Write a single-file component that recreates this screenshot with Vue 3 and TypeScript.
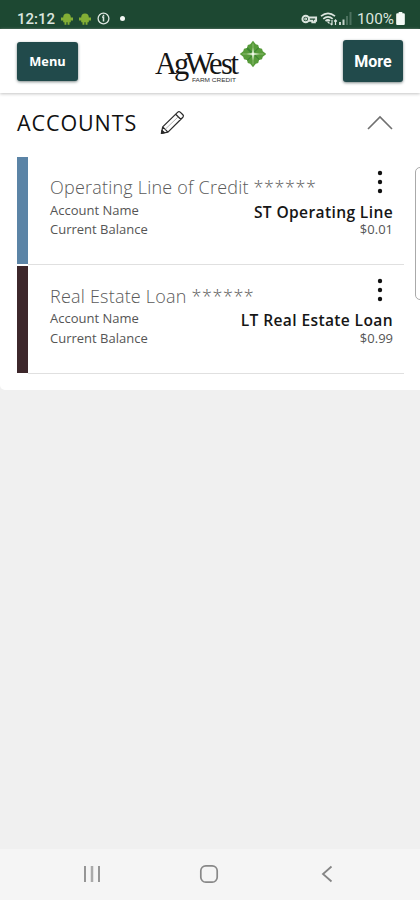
<script setup lang="ts">
interface Account {
  title: string
  mask: string
  name: string
  balance: string
  tone: string
}

const accounts: Account[] = [
  { title: 'Operating Line of Credit', mask: '******', name: 'ST Operating Line', balance: '$0.01', tone: 'blue' },
  { title: 'Real Estate Loan', mask: '******', name: 'LT Real Estate Loan', balance: '$0.99', tone: 'brown' },
]
</script>

<template>
  <div class="screen">
    <div class="status">
      <span class="clock">12:12</span>
      <svg v-for="n in 2" :key="n" class="droid" width="12" height="14" viewBox="0 0 12 14">
        <path d="M2.200 5.200a3.800 3.800 0 0 1 7.600 0zM2.200 5.200h7.600v5H8.500v2.600H6.600v-2.600H5.400v2.600H3.500v-2.600H2.200zM0 5.500h12v3H0z" fill="#83ae35" />
      </svg>
      <svg class="info" width="13" height="13" viewBox="0 0 13 13" fill="none" stroke="#dce5df">
        <circle cx="6.500" cy="6.500" r="5.400" stroke-width="1.300" />
        <path d="M5 5h1.500v4.500M6.500 2.800v1.200" stroke-width="1.500" />
      </svg>
      <span class="dot"></span>
      <div class="status-right">
        <svg width="17" height="12" viewBox="0 0 17 12" fill="none" stroke="#dce5df" stroke-width="1.900">
          <circle cx="4.700" cy="6" r="3.300" />
          <path d="M7.800 4.500h7.300v3.200h-1.200v1.600h-2.600v-1.600h-4" />
          <circle cx="4.700" cy="6" r=".5" />
        </svg>
        <svg class="wifi" width="18" height="14" viewBox="0 0 18 14" fill="none" stroke="#dce5df" stroke-width="1.700">
          <path d="M1 4.200Q8 -1.500 15 4.200M3.300 6.800Q8 2.800 12.700 6.800M5.500 9Q8 7 10 9" />
          <path d="M7.500 9.500l2 2M12 8v5m-1.500-1.500 1.500 1.500M15.500 13V8m-1.300 1.500 1.300-1.500 1.300 1.500" stroke-width="1.200" />
        </svg>
        <svg class="signal" width="13" height="13" viewBox="0 0 13 13">
          <path d="M0 10h2v3H0zM3.500 7.500h2V13h-2z" fill="#c4d2ca" />
          <path d="M7 4h2v9H7zM10.500 0h2v13h-2z" fill="#4c715e" />
        </svg>
        <span class="percent">100%</span>
        <svg class="battery" width="9" height="13" viewBox="0 0 8 12"><path d="M2.300 0h3.400v1.200H7q1 0 1 1V11q0 1-1 1H1q-1 0-1-1V2.200q0-1 1-1h1.300z" fill="#f4faf6" /></svg>
      </div>
    </div>

    <header class="header">
      <button class="btn menu" type="button">Menu</button>
      <svg class="logo" width="112" height="46" viewBox="0 0 112 46">
        <text class="logo-name" x="1 20 31 55 67 76.500" y="34">AgWest</text>
        <text class="logo-sub" x="38" y="41.500" textLength="44" lengthAdjust="spacingAndGlyphs">FARM CREDIT</text>
        <g transform="translate(99 14)">
          <g v-for="r in [0, 90, 180, 270]" :key="r" :transform="`rotate(${r})`">
            <path d="M0 0L-6-6-5.200-9-2.800-9.800 0-13.200 2.800-9.800 5.200-9 6-6z" fill="#579b3a" />
            <path d="M0-1V-10.500" stroke="#83b867" stroke-width="1.200" />
            <path d="M1.500-1.500L6-6" stroke="#3b8530" stroke-width="1.800" />
          </g>
          <path d="M0-6.500L.8-.8 6.500 0 .8.8 0 6.500-.8.8-6.500 0-.8-.8z" fill="#f5fbee" />
        </g>
      </svg>
      <button class="btn more" type="button">More</button>
    </header>

    <main class="panel">
      <div class="heading">
        <h1>ACCOUNTS</h1>
        <svg class="pencil" width="25" height="25" viewBox="0 0 26 26" fill="none" stroke="#2b2b2b" stroke-width="1.300" stroke-linejoin="round">
          <path d="M1.500 24.300l1.300-6.800L18.500 2.200q1.200-1.200 2.500 0l2.800 2.800q1.200 1.200 0 2.500L8.300 23zM2.800 17.500l5.500 5.500M16.300 4.400l5.500 5.500" />
          <path d="M5.500 20L19 7" stroke="#999" stroke-width=".8" />
          <path d="M1.500 24.300l.6-3 2.500 2.200z" fill="#222" />
        </svg>
        <svg class="chevron" width="26" height="16" viewBox="0 0 26 16" fill="none" stroke="#707070" stroke-width="1.600"><path d="M1 14L13 2l12 12" /></svg>
      </div>

      <section v-for="account in accounts" :key="account.name" class="account" :class="account.tone">
        <div class="stripe"></div>
        <div class="details">
          <div class="title-row">
            <h2><span class="title">{{ account.title }}</span> <span class="mask">{{ account.mask }}</span></h2>
            <svg class="kebab" width="6" height="24" viewBox="0 0 6 24" fill="#111"><circle cx="3" cy="3" r="2.200" /><circle cx="3" cy="12" r="2.200" /><circle cx="3" cy="21" r="2.200" /></svg>
          </div>
          <div class="line"><span>Account Name</span><strong>{{ account.name }}</strong></div>
          <div class="line"><span>Current Balance</span><span class="amount">{{ account.balance }}</span></div>
        </div>
      </section>
      <div class="side-tab"></div>
    </main>

    <nav class="navbar">
      <svg width="18" height="18" viewBox="0 0 18 18" fill="none" stroke-width="1.700"><path d="M2 1v16M16 1v16" stroke="#858585" /><path d="M9 1v16" stroke="#aaa" stroke-width="2.500" /></svg>
      <svg class="home" width="20" height="20" viewBox="0 0 20 20" fill="none" stroke="#888" stroke-width="1.700"><rect x="1.800" y="1.800" width="16.400" height="16.400" rx="5" /></svg>
      <svg width="12" height="18" viewBox="0 0 12 18" fill="none" stroke="#858585" stroke-width="1.800"><path d="M10.500 1.500L2 9l8.500 7.500" /></svg>
    </nav>
  </div>
</template>

<style>
body {
  margin: 0;
}
</style>

<style scoped>
* {
  box-sizing: border-box;
}
.screen {
  display: flex;
  flex-direction: column;
  width: 420px;
  height: 900px;
  overflow: hidden;
  background: #f0f0f0;
  font-family: "Open Sans", sans-serif;
}
svg {
  display: block;
  flex: none;
}
.status {
  display: flex;
  align-items: center;
  flex: none;
  height: 29px;
  padding: 8px 15px 0 17px;
  background: #1d4832;
  color: #dce5df;
  font-family: Roboto, sans-serif;
}
.clock {
  width: 44px;
  font-size: 15px;
  font-weight: 500;
  line-height: 20px;
}
.droid {
  margin-right: 6px;
}
.dot {
  width: 5px;
  height: 5px;
  margin-left: 10px;
  border-radius: 50%;
  background: #f3f8f4;
}
.status-right {
  display: flex;
  align-items: center;
  margin-left: auto;
}
.wifi {
  margin-left: 2px;
}
.signal {
  margin-left: 1px;
}
.percent {
  width: 38px;
  margin-left: 5px;
  font-size: 15.300px;
  line-height: 20px;
}
.battery {
  margin-left: 1px;
}
.header {
  display: flex;
  justify-content: space-between;
  flex: none;
  position: relative;
  z-index: 1;
  height: 64px;
  padding: 11px 17px 0;
  background: #fff;
  box-shadow: 0 1px 3px #c4c4c4;
}
.btn {
  padding: 0;
  border: 0;
  border-radius: 3px;
  background: #214a4b;
  color: #fff;
  box-shadow: 0 1px 3px #7d8989;
}
.menu {
  width: 61px;
  height: 39px;
  margin-top: 2px;
  padding-bottom: 1px;
  font: 700 12.800px "Open Sans", sans-serif;
}
.more {
  width: 60px;
  height: 42px;
  padding-top: 1px;
  font: 700 16px Roboto, sans-serif;
}
.logo {
  margin-left: -1px;
}
.logo-name {
  font: 30.500px "Liberation Serif", serif;
  fill: #151515;
}
.logo-sub {
  font: 5.500px "Liberation Sans", sans-serif;
  fill: #333;
}
.panel {
  position: relative;
  flex: none;
  height: 297px;
  padding: 0 16px;
  border-radius: 0 0 0 5px;
  background: #fff;
}
.heading {
  display: flex;
  align-items: center;
  height: 64px;
  padding: 0 11px 5px 1px;
}
h1 {
  width: 143px;
  margin: 0;
  color: #111;
  font-size: 21.500px;
  font-weight: 400;
  letter-spacing: 0.900px;
}
.chevron {
  margin-left: auto;
}
.account {
  display: flex;
  height: 108px;
}
.account + .account {
  margin-top: 1px;
}
.stripe {
  width: 11px;
  height: 107px;
  margin-left: 1px;
  background: #5b84a6;
}
.brown .stripe {
  background: #3d272b;
}
.details {
  flex: 1;
  padding: 10px 11px 0 22px;
  border-bottom: 1px solid #e0e0e0;
}
.brown .details {
  padding-top: 9px;
}
.title-row {
  display: flex;
  justify-content: space-between;
  height: 34px;
  padding-right: 10px;
}
h2 {
  margin: 6px 0 0;
  color: #5a5a5a;
  font-size: 18px;
  font-weight: 300;
  letter-spacing: 0.210px;
  line-height: 28px;
  white-space: nowrap;
}
.brown h2 {
  margin-top: 7px;
}
.mask {
  letter-spacing: 0.550px;
}
.kebab {
  margin-top: 3px;
}
.line {
  display: flex;
  justify-content: space-between;
  height: 19px;
  color: #555;
  font-size: 13px;
  line-height: 19px;
}
.brown .line:last-child {
  padding-top: 1px;
}
.line strong {
  padding-top: 3px;
  color: #161616;
  font-size: 15.600px;
  font-weight: 600;
  letter-spacing: 0.360px;
  line-height: 17px;
}
.side-tab {
  position: absolute;
  top: 74px;
  right: -7px;
  width: 12px;
  height: 133px;
  border: 1px solid #aaa;
  border-radius: 5px;
  background: #fff;
}
.navbar {
  display: flex;
  align-items: center;
  justify-content: space-between;
  height: 51px;
  margin-top: auto;
  padding: 0 87px 2px 83px;
  background: #f5f5f5;
}
.home {
  margin-right: 4px;
}
</style>
